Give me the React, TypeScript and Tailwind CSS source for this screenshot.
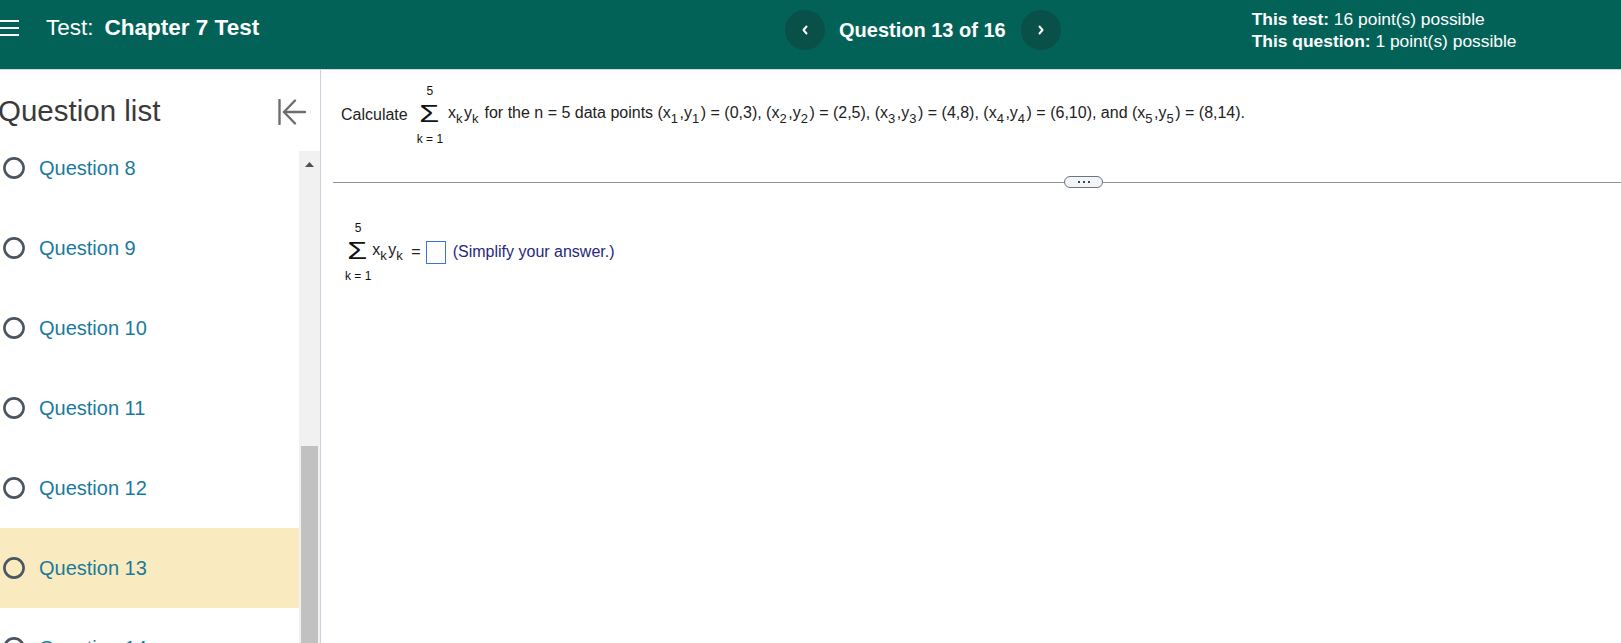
import React from "react";

const font = { fontFamily: '"Liberation Sans", Arial, sans-serif' };

function Sub({ children }: { children: React.ReactNode }) {
  return <span className="text-[13px] align-[-5px] mr-[1.5px]">{children}</span>;
}

function Sigma() {
  return (
    <div className="flex flex-col items-center leading-none text-[#111]">
      <div className="h-[15px] text-[12px] leading-[15px]">5</div>
      <div className="h-[33px] flex items-center">
        <span className="inline-block text-[23px] leading-none scale-x-[1.4] -translate-x-[1px] -translate-y-[1px]">Σ</span>
      </div>
      <div className="h-[14px] text-[12px] leading-[14px] whitespace-pre">k = 1</div>
    </div>
  );
}

function Chevron({ dir }: { dir: "left" | "right" }) {
  return (
    <svg width="8" height="10" viewBox="0 0 8 10" fill="none" stroke="white" strokeWidth="2" strokeLinecap="round" strokeLinejoin="round">
      {dir === "left" ? <path d="M5.5 1.5 L2.5 5 L5.5 8.5" /> : <path d="M2.5 1.5 L5.5 5 L2.5 8.5" />}
    </svg>
  );
}

function Radio() {
  return (
    <svg width="22" height="22" viewBox="0 0 22 22">
      <circle cx="11" cy="11" r="9.6" fill="none" stroke="#4a5561" strokeWidth="2.6" />
    </svg>
  );
}

const questions = [8, 9, 10, 11, 12, 13, 14];

export default function App() {
  return (
    <div className="h-screen w-full flex flex-col bg-white overflow-hidden" style={font}>
      {/* top bar */}
      <header className="h-[70px] flex-none bg-[#036258] text-white flex items-center pb-[10px] border-b border-[#d3d9e2]">
        <div className="w-[785px] flex items-center mb-[4px]">
          <div className="flex flex-col gap-[5px]">
            <div className="h-[2px] w-[19px] bg-white" />
            <div className="h-[2px] w-[19px] bg-white" />
            <div className="h-[2px] w-[19px] bg-white" />
          </div>
          <span className="ml-[27px] text-[22.5px]">Test:</span>
          <span className="ml-[11px] text-[22.5px] font-bold">Chapter 7 Test</span>
        </div>
        <button className="w-[40px] h-[40px] rounded-full bg-[#095049] flex items-center justify-center">
          <Chevron dir="left" />
        </button>
        <span className="ml-[14px] text-[20px] font-bold">Question 13 of 16</span>
        <button className="ml-[15px] w-[40px] h-[40px] rounded-full bg-[#095049] flex items-center justify-center">
          <Chevron dir="right" />
        </button>
        <div className="ml-[191px] text-[17.4px] leading-[22px] pt-px">
          <div><span className="font-bold">This test:</span> 16 point(s) possible</div>
          <div><span className="font-bold">This question:</span> 1 point(s) possible</div>
        </div>
      </header>

      <div className="flex-1 flex min-h-0">
        {/* sidebar */}
        <aside className="w-[321px] flex-none flex flex-col border-r border-[#c9d1dd]">
          <div className="h-[81px] flex-none pt-[25px] pr-[14px]">
            <div className="h-[33px] flex items-center justify-between">
              <span className="-ml-[2px] text-[29.5px] text-[#3a3a3a]">Question list</span>
              <svg width="28" height="26" viewBox="0 0 28 26" fill="none" stroke="#6e6e6e" strokeWidth="2.4" strokeLinecap="round" strokeLinejoin="round">
                <path d="M1.5 1 V25" />
                <path d="M6 13 H27" />
                <path d="M17 1.5 L6 13 L17 24.5" />
              </svg>
            </div>
          </div>
          <div className="flex-1 flex min-h-0">
            <div className="flex-1 overflow-hidden">
              <div className="-mt-[23px]">
                {questions.map((q) => (
                  <div
                    key={q}
                    className={
                      q === 13
                        ? "h-[80px] flex items-center gap-[14px] pl-[3px] bg-[#f9ebbf]"
                        : "h-[80px] flex items-center gap-[14px] pl-[3px]"
                    }
                  >
                    <Radio />
                    <span className="text-[20px] text-[#1a7a9c]">Question {q}</span>
                  </div>
                ))}
              </div>
            </div>
            <div className="w-[21px] flex-none flex flex-col bg-[#f1f1f1]">
              <div className="h-[26px] flex items-center justify-center">
                <svg width="9" height="5" viewBox="0 0 9 5">
                  <path d="M0 5 L4.5 0 L9 5 Z" fill="#505050" />
                </svg>
              </div>
              <div className="h-[269px]" />
              <div className="flex-1 mx-[2px] bg-[#c1c1c1]" />
            </div>
          </div>
        </aside>

        {/* question content */}
        <main className="flex-1 min-w-0 pl-[12px] text-[16px] text-[#222]">
          <div className="pt-[14px] pl-[8px] flex items-center">
            <span>Calculate</span>
            <div className="ml-[9px]">
              <Sigma />
            </div>
            <span className="ml-[5px] whitespace-pre">
              x<Sub>k</Sub>y<Sub>k</Sub> for the n = 5 data points (x<Sub>1</Sub>,y<Sub>1</Sub>) = (0,3), (x<Sub>2</Sub>,y
              <Sub>2</Sub>) = (2,5), (x<Sub>3</Sub>,y<Sub>3</Sub>) = (4,8), (x<Sub>4</Sub>,y<Sub>4</Sub>) = (6,10), and (x
              <Sub>5</Sub>,y<Sub>5</Sub>) = (8,14).
            </span>
          </div>

          <div className="mt-[30px] flex items-center">
            <div className="w-[731px] h-px bg-[#8c939b]" />
            <div className="w-[39px] h-[12px] rounded-full border border-[#6b7480] bg-[#f3f4f6] flex items-center justify-center gap-[3px]">
              <div className="w-[2px] h-[2px] bg-[#3c4650]" />
              <div className="w-[2px] h-[2px] bg-[#3c4650]" />
              <div className="w-[2px] h-[2px] bg-[#3c4650]" />
            </div>
            <div className="flex-1 h-px bg-[#8c939b]" />
          </div>

          <div className="mt-[33px] pl-[12px] flex items-center">
            <Sigma />
            <span className="ml-[1px] whitespace-pre">
              x<Sub>k</Sub>y<Sub>k</Sub>
            </span>
            <span className="ml-[7px]">=</span>
            <div className="ml-[5px] w-[20px] h-[23px] border border-[#3b73d6] bg-white" />
            <span className="ml-[7px] text-[#27287a]">(Simplify your answer.)</span>
          </div>
        </main>
      </div>
    </div>
  );
}
